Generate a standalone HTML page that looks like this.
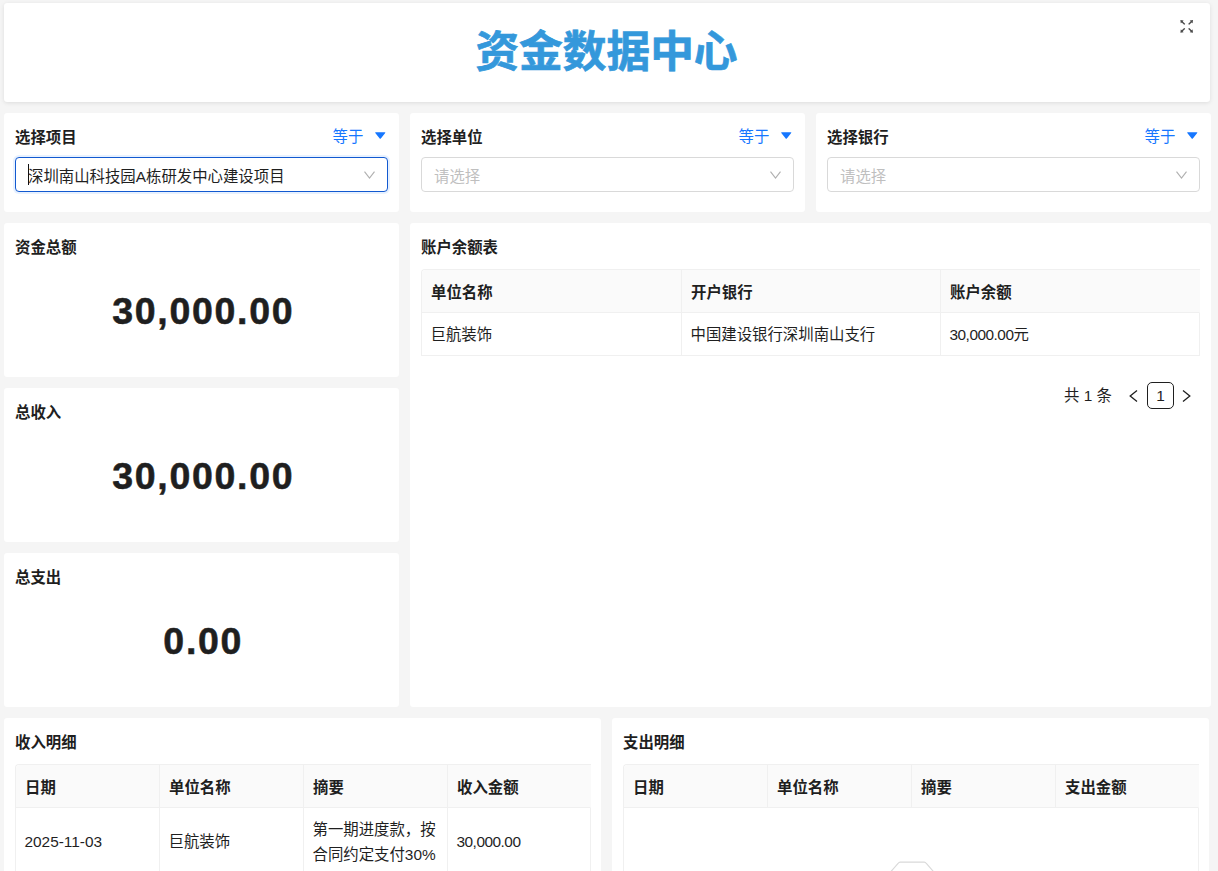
<!DOCTYPE html>
<html lang="zh-CN">
<head>
<meta charset="utf-8">
<title>资金数据中心</title>
<style>
*{box-sizing:border-box;margin:0;padding:0}
html,body{width:1218px;height:871px;overflow:hidden;background:#f5f5f5}
body{position:relative;font-family:"Liberation Sans","Noto Sans CJK SC",sans-serif;font-size:15.4px;color:#1f1f1f;line-height:24.2px}
.card{position:absolute;background:#fff;border-radius:3.3px;overflow:hidden}
.hd{box-shadow:0 1px 4px rgba(0,0,0,.10);overflow:visible}
.ttl{position:absolute;left:11px;top:12.8px;font-weight:700;font-size:15.4px;line-height:24.2px;white-space:nowrap}
.h1{position:absolute;left:0;right:0;top:17px;text-align:center;font-size:43.7px;line-height:64px;font-weight:700;color:#3498db;white-space:nowrap;-webkit-text-stroke:0.7px #3498db;padding-right:1.4px}
.op{position:absolute;right:35.6px;top:12.4px;color:#1677ff;font-size:15.4px;line-height:24.2px}
.tri{position:absolute;right:13.1px;top:19px;width:10.5px;height:7px}
.sel{position:absolute;left:11px;top:44px;width:373px;height:35px;border:1px solid #d9d9d9;border-radius:4px;background:#fff}
.sel.on{border:1.5px solid #1259d0;box-shadow:0 0 0 2px rgba(22,119,255,.10)}
.sel .tx{position:absolute;left:12px;top:1.5px;line-height:33px;white-space:nowrap}
.sel .ph{color:#bfbfbf}
.sel svg{position:absolute;right:12px;top:13px;width:11px;height:8px}
.caret{position:absolute;left:12px;top:6px;width:1px;height:21px;background:#111}
.num{position:absolute;left:0;right:0;top:61px;text-align:center;font-weight:700;font-size:37.5px;line-height:54px;letter-spacing:1.7px;color:#1f1f1f;white-space:nowrap;-webkit-text-stroke:0.55px #1f1f1f;padding-left:3.5px}
table{border-collapse:separate;border-spacing:0;table-layout:fixed;position:absolute;border-top:1px solid #f0f0f0;border-left:1px solid #f0f0f0;border-radius:4px 0 0 0}
th{background:#fafafa;font-weight:700;text-align:left;height:43px;padding:3.6px 9px 0;border-right:1px solid #f0f0f0;border-bottom:1px solid #f0f0f0;white-space:nowrap}
th:first-child{border-top-left-radius:4px}
th:last-child{border-right-color:#fafafa}
td{padding:10.4px 9px 7.2px 8.5px;border-right:1px solid #f0f0f0;border-bottom:1px solid #f0f0f0;vertical-align:middle}
.n{letter-spacing:-0.5px}
.pg{position:absolute;font-size:15.4px;line-height:27px;white-space:nowrap}
</style>
</head>
<body>

<!-- header -->
<div class="card hd" style="left:4px;top:3px;width:1206.3px;height:99px">
  <div class="h1">资金数据中心</div>
  <svg style="position:absolute;left:1174px;top:15px;width:18px;height:18px" viewBox="25.6 42.4 1008 1008" fill="#4a4a4a">
    <path d="M290 236.400l43.900-43.900a8.010 8.010 0 0 0-4.700-13.600L169 160c-5.100-.600-9.500 3.700-8.900 8.900L179 329.100c.8 6.600 8.900 9.400 13.600 4.700l43.700-43.700L370 423.700c3.100 3.100 8.200 3.100 11.300 0l42.400-42.300c3.100-3.100 3.100-8.200 0-11.300L290 236.400zm352.700 187.300c3.100 3.100 8.200 3.100 11.300 0l133.700-133.600 43.700 43.700a8.010 8.010 0 0 0 13.600-4.700L863.900 169c.6-5.100-3.700-9.500-8.900-8.900L694.800 179c-6.600.8-9.400 8.900-4.700 13.600l43.900 43.900L600.300 370a8.030 8.030 0 0 0 0 11.300l42.400 42.400zM845 694.900c-.8-6.600-8.900-9.400-13.600-4.700l-43.700 43.700L654 600.300a8.030 8.030 0 0 0-11.300 0l-42.400 42.300a8.030 8.030 0 0 0 0 11.300L734 787.600l-43.900 43.900a8.010 8.010 0 0 0 4.700 13.600L855 864c5.100.6 9.500-3.700 8.900-8.900L845 694.900zm-463.700-94.600a8.030 8.030 0 0 0-11.300 0L236.300 733.900l-43.700-43.700a8.010 8.010 0 0 0-13.600 4.700L160.100 855c-.6 5.100 3.700 9.500 8.900 8.900L329.200 845c6.600-.8 9.400-8.900 4.700-13.600L290 787.600 423.700 654c3.100-3.100 3.100-8.200 0-11.300l-42.400-42.400z"/>
  </svg>
</div>

<!-- filters -->
<div class="card" style="left:4px;top:113px;width:395px;height:99px">
  <div class="ttl">选择项目</div>
  <div class="op">等于</div>
  <svg class="tri" viewBox="0 0 11 7"><path d="M0.8 0h9.4c.6 0 .9.6.5 1L6.1 6.6c-.3.4-.9.4-1.2 0L.3 1C-.1.6.2 0 .8 0z" fill="#1677ff"/></svg>
  <div class="sel on"><div class="caret"></div><div class="tx">深圳南山科技园A栋研发中心建设项目</div>
    <svg viewBox="0 0 11 8"><path d="M0.5 0.6L5.5 7L10.5 0.6" fill="none" stroke="#b0b0b0" stroke-width="1.15"/></svg></div>
</div>
<div class="card" style="left:410px;top:113px;width:395px;height:99px">
  <div class="ttl">选择单位</div>
  <div class="op">等于</div>
  <svg class="tri" viewBox="0 0 11 7"><path d="M0.8 0h9.4c.6 0 .9.6.5 1L6.1 6.6c-.3.4-.9.4-1.2 0L.3 1C-.1.6.2 0 .8 0z" fill="#1677ff"/></svg>
  <div class="sel"><div class="tx ph">请选择</div>
    <svg viewBox="0 0 11 8"><path d="M0.5 0.6L5.5 7L10.5 0.6" fill="none" stroke="#b0b0b0" stroke-width="1.15"/></svg></div>
</div>
<div class="card" style="left:816px;top:113px;width:395px;height:99px">
  <div class="ttl">选择银行</div>
  <div class="op">等于</div>
  <svg class="tri" viewBox="0 0 11 7"><path d="M0.8 0h9.4c.6 0 .9.6.5 1L6.1 6.6c-.3.4-.9.4-1.2 0L.3 1C-.1.6.2 0 .8 0z" fill="#1677ff"/></svg>
  <div class="sel"><div class="tx ph">请选择</div>
    <svg viewBox="0 0 11 8"><path d="M0.5 0.6L5.5 7L10.5 0.6" fill="none" stroke="#b0b0b0" stroke-width="1.15"/></svg></div>
</div>

<!-- stats -->
<div class="card" style="left:4px;top:223px;width:395px;height:154px">
  <div class="ttl">资金总额</div>
  <div class="num">30,000.00</div>
</div>
<div class="card" style="left:4px;top:388px;width:395px;height:154px">
  <div class="ttl">总收入</div>
  <div class="num">30,000.00</div>
</div>
<div class="card" style="left:4px;top:553px;width:395px;height:154px">
  <div class="ttl">总支出</div>
  <div class="num">0.00</div>
</div>

<!-- balance table -->
<div class="card" style="left:410px;top:223px;width:801px;height:484px">
  <div class="ttl">账户余额表</div>
  <table style="left:11px;top:46px;width:778px">
    <colgroup><col style="width:260px"><col style="width:259px"><col style="width:259px"></colgroup>
    <tr><th>单位名称</th><th>开户银行</th><th>账户余额</th></tr>
    <tr><td>巨航装饰</td><td>中国建设银行深圳南山支行</td><td><span class="n">30,000.00</span>元</td></tr>
  </table>
  <div class="pg" style="left:654px;top:159px">共 1 条</div>
  <svg style="position:absolute;left:719px;top:167px;width:9px;height:12px" viewBox="0 0 9 12"><path d="M8 0.6L1.2 6L8 11.4" fill="none" stroke="#1f1f1f" stroke-width="1.3"/></svg>
  <div class="pg" style="left:737px;top:159px;width:27px;height:27px;border:1px solid #1f1f1f;border-radius:5px;text-align:center;line-height:25px">1</div>
  <svg style="position:absolute;left:772px;top:167px;width:9px;height:12px" viewBox="0 0 9 12"><path d="M1 0.6L7.8 6L1 11.4" fill="none" stroke="#1f1f1f" stroke-width="1.3"/></svg>
</div>

<!-- income -->
<div class="card" style="left:4px;top:718px;width:597px;height:200px">
  <div class="ttl">收入明细</div>
  <table style="left:11px;top:46px;width:575px">
    <colgroup><col style="width:144px"><col style="width:144px"><col style="width:144px"><col style="width:143px"></colgroup>
    <tr><th>日期</th><th>单位名称</th><th>摘要</th><th>收入金额</th></tr>
    <tr><td>2025-11-03</td><td>巨航装饰</td><td>第一期进度款，按合同约定支付30%</td><td><span class="n">30,000.00</span></td></tr>
  </table>
</div>

<!-- expense -->
<div class="card" style="left:612px;top:718px;width:597px;height:200px">
  <div class="ttl">支出明细</div>
  <table style="left:11px;top:46px;width:575px">
    <colgroup><col style="width:144px"><col style="width:144px"><col style="width:144px"><col style="width:143px"></colgroup>
    <tr><th>日期</th><th>单位名称</th><th>摘要</th><th>支出金额</th></tr>
    <tr><td colspan="4" style="height:200px"></td></tr>
  </table>
  <svg style="position:absolute;left:264.8px;top:142.8px;width:70.4px;height:45.1px" viewBox="0 0 64 41">
    <g transform="translate(0 1)" fill="none" fill-rule="evenodd">
      <ellipse fill="#f5f5f5" cx="32" cy="33" rx="32" ry="7"/>
      <g fill-rule="nonzero" stroke="#d9d9d9">
        <path d="M55 12.76L44.854 1.258C44.367.474 43.656 0 42.907 0H21.093c-.749 0-1.46.474-1.947 1.257L9 12.761V22h46v-9.24z"/>
        <path d="M41.613 15.931c0-1.605.994-2.93 2.227-2.931H55v18.137C55 33.26 53.68 35 52.05 35h-40.1C10.32 35 9 33.259 9 31.137V13h11.16c1.233 0 2.227 1.323 2.227 2.928v.022c0 1.605 1.005 2.901 2.237 2.901h14.752c1.232 0 2.237-1.308 2.237-2.913v-.007z" fill="#fafafa"/>
      </g>
    </g>
  </svg>
</div>

</body>
</html>
